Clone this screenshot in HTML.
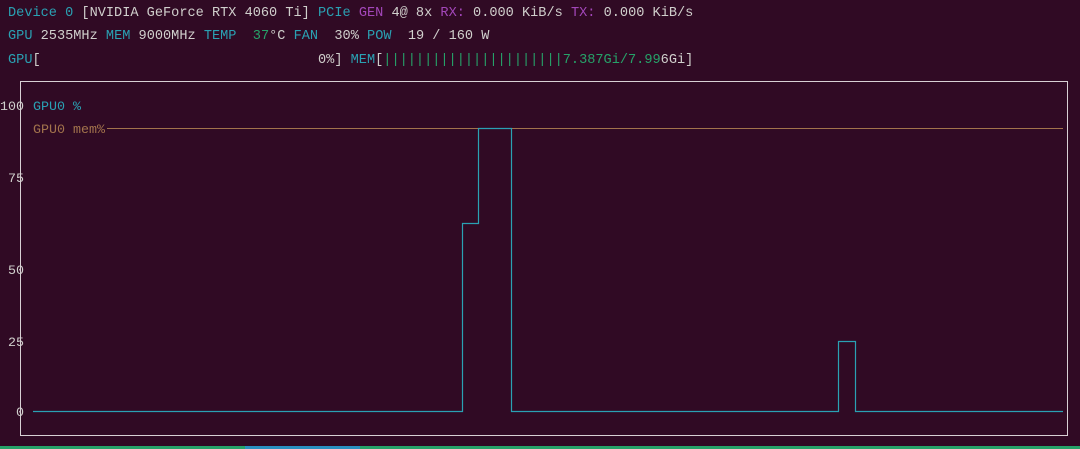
<!DOCTYPE html>
<html><head><meta charset="utf-8"><style>
html,body{margin:0;padding:0;background:#300a24;width:1080px;height:449px;overflow:hidden}
body{font-family:"Liberation Mono",monospace;font-size:13.6px;color:#d0cfcc;position:relative}
.l{position:absolute;left:8px;white-space:pre;line-height:16px}
.c{color:#2aa1b3}.p{color:#a347ba}.g{color:#26a269}.o{color:#a2734c}
.y{position:absolute;white-space:pre;line-height:16px;font-size:13.33px}
</style></head><body>
<div class="l" style="top:6px"><span class="c">Device 0</span> [NVIDIA GeForce RTX 4060 Ti] <span class="c">PCIe</span> <span class="p">GEN</span> 4@ 8x <span class="p">RX:</span> 0.000 KiB/s <span class="p">TX:</span> 0.000 KiB/s</div>
<div class="l" style="top:29px"><span class="c">GPU</span> 2535MHz <span class="c">MEM</span> 9000MHz <span class="c">TEMP</span>  <span class="g">37</span>°C <span class="c">FAN</span>  30% <span class="c">POW</span>  19 / 160 W</div>
<div class="l" style="top:53px"><span class="c">GPU</span>[                                  0%] <span class="c">MEM</span>[<span class="g">||||||||||||||||||||||7.387Gi/7.99</span>6Gi]</div>
<div class="y" style="left:0;top:100px">100</div>
<div class="y" style="left:8px;top:172px">75</div>
<div class="y" style="left:8px;top:264px">50</div>
<div class="y" style="left:8px;top:336px">25</div>
<div class="y" style="left:16px;top:406px">0</div>
<div class="y c" style="left:33px;top:100px">GPU0 %</div>
<div class="y o" style="left:33px;top:123px">GPU0 mem%</div>
<svg width="1080" height="449" style="position:absolute;left:0;top:0">
<rect x="20.5" y="81.5" width="1047" height="354" fill="none" stroke="#d8d0d4" stroke-width="1"/>
<line x1="107" y1="128.5" x2="1063" y2="128.5" stroke="#a2734c" stroke-width="1"/>
<polyline fill="none" stroke="#2aa1b3" stroke-width="1.2" points="33,411.5 462.5,411.5 462.5,223.5 478.5,223.5 478.5,128.5 511.5,128.5 511.5,411.5 838.5,411.5 838.5,341.5 855.5,341.5 855.5,411.5 1063,411.5"/>
<rect x="0" y="446" width="1080" height="3" fill="#26a269"/>
<rect x="245" y="446" width="115" height="3" fill="#2a8fc0"/>
</svg>
</body></html>
